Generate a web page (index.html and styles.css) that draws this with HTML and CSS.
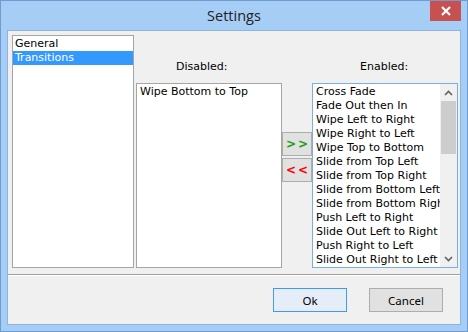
FILE: index.html
```html
<!DOCTYPE html>
<html lang="en">
<head>
    <meta charset="UTF-8">
    <title>Settings</title>
    <link rel="stylesheet" href="styles.css">
</head>
<body>
    <div class="window">
        <div class="titlebar">
            <span></span>
            <span class="title">Settings</span>
            <span class="close">
                <svg width="12" height="10" viewBox="0 0 12 10">
                    <path d="M2 1 L10 9 M10 1 L2 9" stroke="#fff" stroke-width="2.2"/>
                </svg>
            </span>
        </div>

        <div class="client">
            <div class="panes">
                <ul class="listbox pages">
                    <li>General</li>
                    <li class="selected">Transitions</li>
                </ul>

                <div class="column">
                    <div class="caption disabled-caption">Disabled:</div>
                    <ul class="listbox transitions">
                        <li>Wipe Bottom to Top</li>
                    </ul>
                </div>

                <div class="movers">
                    <button class="mover add">&gt;&gt;</button>
                    <button class="mover remove">&lt;&lt;</button>
                </div>

                <div class="column">
                    <div class="caption enabled-caption">Enabled:</div>
                    <div class="listbox transitions focused">
                        <ul class="items">
                            <li>Cross Fade</li>
                            <li>Fade Out then In</li>
                            <li>Wipe Left to Right</li>
                            <li>Wipe Right to Left</li>
                            <li>Wipe Top to Bottom</li>
                            <li>Slide from Top Left</li>
                            <li>Slide from Top Right</li>
                            <li>Slide from Bottom Left</li>
                            <li>Slide from Bottom Right</li>
                            <li>Push Left to Right</li>
                            <li>Slide Out Left to Right</li>
                            <li>Push Right to Left</li>
                            <li>Slide Out Right to Left</li>
                        </ul>
                        <div class="scrollbar">
                            <div class="arrow">
                                <svg width="9" height="6" viewBox="0 0 9 6"><path d="M1 5 L4.5 1.5 L8 5" fill="none" stroke="#606060" stroke-width="1.6"/></svg>
                            </div>
                            <div class="track"><div class="thumb"></div></div>
                            <div class="arrow">
                                <svg width="9" height="6" viewBox="0 0 9 6"><path d="M1 1 L4.5 4.5 L8 1" fill="none" stroke="#606060" stroke-width="1.6"/></svg>
                            </div>
                        </div>
                    </div>
                </div>
            </div>

            <div class="separator"></div>

            <div class="actions">
                <button class="button default">Ok</button>
                <button class="button">Cancel</button>
            </div>
        </div>
    </div>
</body>
</html>
```

FILE: styles.css
```css
body {
    margin: 0;
    background-color: #ffffff;
    font-family: 'DejaVu Sans', sans-serif;
}
.window {
    width: 468px;
    height: 332px;
    box-sizing: border-box;
    border: 1px solid #6f9bd0;
    background-color: #a6cdf6;
    padding: 0 6px 6px 6px;
    display: flex;
    flex-direction: column;
}
.titlebar {
    height: 29px;
    display: grid;
    grid-template-columns: 1fr auto 1fr;
    align-items: start;
}
.title {
    font-family: 'Open Sans', sans-serif;
    font-size: 14.5px;
    color: #222;
    line-height: 29px;
}
.close {
    justify-self: end;
    width: 31px;
    height: 20px;
    background-color: #c75050;
    display: flex;
    align-items: center;
    justify-content: center;
}
.client {
    flex: 1;
    background-color: #f0f0f0;
    border: 1px solid #8db3de;
    padding: 4px 2px 0 4px;
    display: flex;
    flex-direction: column;
}
.panes {
    display: flex;
    height: 233px;
}
.listbox {
    list-style-type: none;
    margin: 0;
    padding: 1px 0 0 0;
    background-color: white;
    border: 1px solid #a5a5a5;
    box-sizing: border-box;
    font-size: 11px;
    line-height: 14px;
    color: #000;
}
.listbox li {
    padding-left: 2px;
    white-space: nowrap;
}
.pages {
    width: 122px;
    height: 233px;
}
.pages li.selected {
    background-color: #3399ff;
    color: white;
}
.column {
    display: flex;
    flex-direction: column;
    width: 146px;
}
.column:nth-child(2) {
    margin-left: 2px;
}
.caption {
    height: 48px;
    box-sizing: border-box;
    padding-bottom: 9px;
    display: flex;
    align-items: flex-end;
    font-size: 11px;
    line-height: 14px;
    color: #000;
}
.disabled-caption {
    padding-left: 40px;
}
.enabled-caption {
    padding-left: 48px;
}
.transitions {
    height: 185px;
}
.transitions li {
    padding-left: 3px;
}
.focused {
    border-color: #7aaee6;
    padding-top: 0;
    display: flex;
}
.items {
    list-style-type: none;
    margin: 0;
    padding: 1px 0 0 0;
    flex: 1;
    overflow: hidden;
}
.scrollbar {
    width: 17px;
    background-color: #f0f0f0;
    display: flex;
    flex-direction: column;
}
.arrow {
    height: 17px;
    display: flex;
    align-items: center;
    justify-content: center;
}
.track {
    flex: 1;
    padding: 0 1px;
}
.thumb {
    height: 53px;
    background-color: #cdcdcd;
}
.movers {
    width: 30px;
    padding-top: 97px;
    display: flex;
    flex-direction: column;
    gap: 2px;
}
.mover {
    height: 24px;
    margin: 0;
    padding: 0;
    background-color: #e1e1e1;
    border: 1px solid #adadad;
    font-family: 'DejaVu Sans', sans-serif;
    font-size: 12px;
    font-weight: bold;
    letter-spacing: 2px;
    text-indent: 2px;
}
.add {
    color: #16a016;
}
.remove {
    color: #ff0000;
}
.separator {
    margin-top: 6px;
    margin-left: -4px;
    margin-right: -2px;
    height: 1px;
    background-color: #a0a0a0;
    border-bottom: 1px solid #ffffff;
}
.actions {
    display: flex;
    justify-content: flex-end;
    gap: 22px;
    padding: 12px 15px 0 0;
}
.button {
    width: 74px;
    height: 24px;
    margin: 0;
    background-color: #e1e1e1;
    border: 1px solid #adadad;
    font-family: 'Noto Sans', sans-serif;
    font-size: 11.5px;
    color: #000;
}
.button.default {
    background-color: #e5eef8;
    border-color: #3d9bf3;
}
```
